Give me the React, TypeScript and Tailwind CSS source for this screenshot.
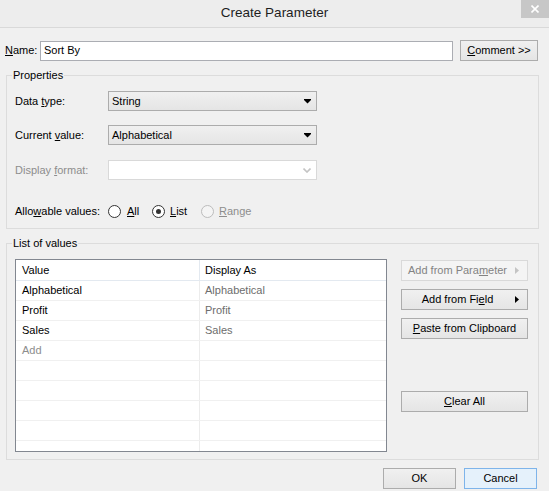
import type { ReactNode } from "react";

const values = [
  { value: "Alphabetical", display: "Alphabetical" },
  { value: "Profit", display: "Profit" },
  { value: "Sales", display: "Sales" },
];

// little filled arrow used by the combo boxes
const DropArrow = () => (
  <svg width="7" height="5" viewBox="0 0 7 5" className="shrink-0">
    <rect x="0" y="0" width="7" height="1" fill="#000" />
    <polygon points="0,1 7,1 3.5,4.5" fill="#000" />
  </svg>
);

const Chevron = () => (
  <svg width="8" height="5" viewBox="0 0 8 5" className="shrink-0">
    <polyline points="0.5,0.5 4,4 7.5,0.5" fill="none" stroke="#c4c4c4" strokeWidth="1.6" />
  </svg>
);

const Combo = ({ value, disabled }: { value?: string; disabled?: boolean }) => (
  <div
    className={`flex h-[20px] w-[209px] items-center justify-between border pl-[3px] pr-[5px] ${
      disabled ? "border-[#d9d9d9] bg-white" : "border-[#acacac] bg-gradient-to-b from-[#f0f0f0] to-[#e5e5e5]"
    }`}
  >
    <span>{value}</span>
    {disabled ? <Chevron /> : <DropArrow />}
  </div>
);

const Radio = ({ checked, disabled }: { checked?: boolean; disabled?: boolean }) => (
  <span
    className={`flex h-[13px] w-[13px] shrink-0 items-center justify-center rounded-full border ${
      disabled ? "border-[#bcbcbc] bg-[#f4f4f4]" : "border-[#333] bg-white"
    }`}
  >
    {checked && <span className="h-[5px] w-[5px] rounded-full bg-[#333]" />}
  </span>
);

const Button = ({
  children,
  className = "",
  disabled,
  focused,
}: {
  children: ReactNode;
  className?: string;
  disabled?: boolean;
  focused?: boolean;
}) => (
  <div
    className={`flex h-[21px] items-center justify-center border ${
      disabled
        ? "border-[#d9d9d9] bg-[#f4f4f4] text-[#838383]"
        : focused
        ? "border-[#7eb4ea] bg-[#e5f1fb] text-black"
        : "border-[#acacac] bg-gradient-to-b from-[#f0f0f0] to-[#e5e5e5] text-black"
    } ${className}`}
  >
    {children}
  </div>
);

const SubArrow = ({ color }: { color: string }) => (
  <svg width="4" height="7" viewBox="0 0 4 7" className="absolute right-[8px] top-[6px]">
    <polygon points="0,0 4,3.5 0,7" fill={color} />
  </svg>
);

const Row = ({ label, children, dim }: { label: ReactNode; children: ReactNode; dim?: boolean }) => (
  <div className="flex h-[20px] items-center">
    <div className={`w-[93px] ${dim ? "text-[#8d8d8d]" : ""}`}>{label}</div>
    {children}
  </div>
);

export default function App() {
  return (
    <div className="h-[491px] w-[549px] overflow-hidden bg-[#f0f0f0] font-['Liberation_Sans',Arial,sans-serif] text-[11px] text-black">
      {/* title bar */}
      <div className="relative flex h-[28px] items-center justify-center border-b border-[#d9d9d9] bg-[#ededed]">
        <span className="text-[13.5px] text-[#1e1e1e]">Create Parameter</span>
        <div className="absolute right-0 top-0 flex h-[18px] w-[28px] items-center justify-center bg-[#c7c7c7]">
          <svg width="8" height="8" viewBox="0 0 8 8">
            <path d="M0.5 0.5L7.5 7.5M7.5 0.5L0.5 7.5" stroke="#fff" strokeWidth="1.6" />
          </svg>
        </div>
      </div>

      {/* name */}
      <div className="mt-[12px] flex items-center pl-[5px]">
        <span className="w-[35px]">
          <u>N</u>ame:
        </span>
        <div className="flex h-[20px] w-[413px] items-center border border-[#abadb3] bg-white pl-[3px]">Sort By</div>
        <Button className="ml-[7px] w-[78px]">
          <u>C</u>omment &gt;&gt;
        </Button>
      </div>

      {/* properties */}
      <fieldset className="ml-[6px] mt-[7px] w-[533px] border border-[#dcdcdc] pb-[7px] pl-[8px]">
        <legend className="-ml-[3px] px-[1px] leading-[14px]">Properties</legend>
        <div className="mt-[9px] flex flex-col">
          <Row
            label={
              <>
                Data <u>t</u>ype:
              </>
            }
          >
            <Combo value="String" />
          </Row>
          <div className="mt-[14px]">
            <Row
              label={
                <>
                  Current <u>v</u>alue:
                </>
              }
            >
              <Combo value="Alphabetical" />
            </Row>
          </div>
          <div className="mt-[15px]">
            <Row
              dim
              label={
                <>
                  Display <u>f</u>ormat:
                </>
              }
            >
              <Combo disabled />
            </Row>
          </div>
          <div className="mt-[21px]">
            <Row
              label={
                <>
                  Allo<u>w</u>able values:
                </>
              }
            >
              <div className="flex items-center">
                <label className="flex w-[44px] items-center gap-[6px]">
                  <Radio />
                  <span>
                    <u>A</u>ll
                  </span>
                </label>
                <label className="flex w-[49px] items-center gap-[5px]">
                  <Radio checked />
                  <span>
                    <u>L</u>ist
                  </span>
                </label>
                <label className="flex items-center gap-[5px] text-[#8d8d8d]">
                  <Radio disabled />
                  <span>
                    <u>R</u>ange
                  </span>
                </label>
              </div>
            </Row>
          </div>
        </div>
      </fieldset>

      {/* list of values */}
      <fieldset className="ml-[6px] mt-[7px] w-[533px] border border-[#dcdcdc] pb-[7px] pl-[8px]">
        <legend className="-ml-[3px] px-[1px] leading-[14px]">List of values</legend>
        <div className="mt-[9px] flex">
          <div className="h-[193px] w-[372px] overflow-hidden border border-[#828790] bg-white">
            <div className="flex h-[21px] border-b border-[#e3e9f0]">
              <div className="flex w-[184px] items-center border-r border-[#e3e9f0] pl-[6px]">Value</div>
              <div className="flex flex-1 items-center pl-[5px]">Display As</div>
            </div>
            {values.map((r) => (
              <div key={r.value} className="flex h-[20px] border-b border-[#f0f0f0]">
                <div className="flex w-[184px] items-center border-r border-[#ececec] pl-[6px]">{r.value}</div>
                <div className="flex flex-1 items-center pl-[5px] text-[#6d6d6d]">{r.display}</div>
              </div>
            ))}
            <div className="flex h-[20px] border-b border-[#f0f0f0]">
              <div className="flex w-[184px] items-center border-r border-[#ececec] pl-[6px] text-[#8d8d8d]">Add</div>
              <div className="flex-1" />
            </div>
            {[0, 1, 2, 3, 4].map((i) => (
              <div key={i} className="flex h-[20px] border-b border-[#f0f0f0]">
                <div className="w-[184px] border-r border-[#ececec]" />
                <div className="flex-1" />
              </div>
            ))}
          </div>

          <div className="ml-[14px] mt-[1px] flex w-[127px] flex-col">
            <Button disabled className="relative pr-[14px]">
              <span>
                Add from Para<u>m</u>eter
              </span>
              <SubArrow color="#c4c4c4" />
            </Button>
            <Button className="relative mt-[8px] pr-[14px]">
              <span>
                Add from Fi<u>e</u>ld
              </span>
              <SubArrow color="#000" />
            </Button>
            <Button className="mt-[8px]">
              <u>P</u>aste from Clipboard
            </Button>
            <Button className="mt-[52px]">
              <u>C</u>lear All
            </Button>
          </div>
        </div>
      </fieldset>

      {/* dialog buttons */}
      <div className="mt-[8px] flex justify-end gap-[8px] pr-[12px]">
        <Button className="w-[73px]">OK</Button>
        <Button focused className="w-[73px]">
          Cancel
        </Button>
      </div>
    </div>
  );
}
